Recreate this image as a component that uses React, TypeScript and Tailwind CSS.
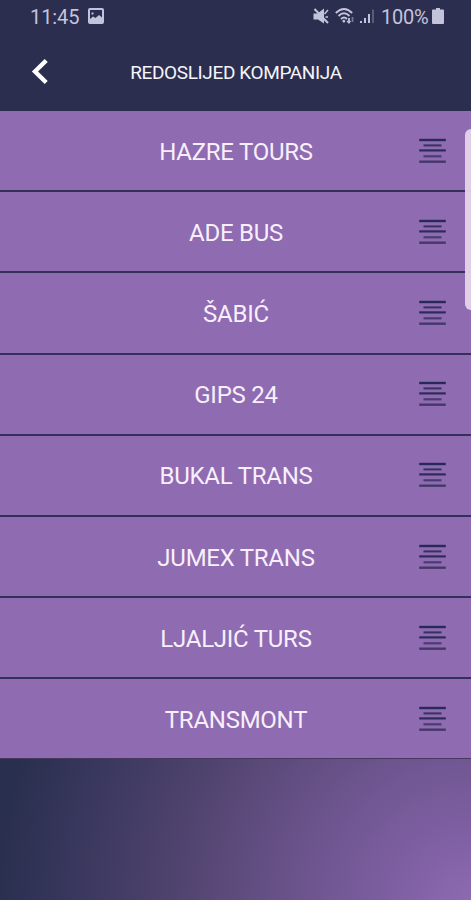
const companies = [
  "HAZRE TOURS",
  "ADE BUS",
  "ŠABIĆ",
  "GIPS 24",
  "BUKAL TRANS",
  "JUMEX TRANS",
  "LJALJIĆ TURS",
  "TRANSMONT",
];

function StatusBar() {
  return (
    <div className="flex h-8 shrink-0 items-center justify-between pl-[30px] pr-[27px] text-[20px] leading-8 text-[#c3c3dc]">
      <div className="flex items-center">
        <span className="w-[49px] pt-px tracking-[-0.1px] whitespace-nowrap">11:45</span>
        <svg className="ml-[9px] h-4 w-4" viewBox="0 0 16 16" fill="none">
          <rect x="1" y="1" width="14" height="14" rx="1" stroke="currentColor" strokeWidth="2" />
          <path d="M2 11 5 8.500l2.500 1.500L11 7l3 2.500V14H2z" fill="currentColor" />
          <path d="M3.500 4.500h2v2h-2z" fill="currentColor" />
        </svg>
      </div>
      <div className="flex items-center">
        <svg className="h-4 w-4" viewBox="0 0 16 16" fill="none">
          <path d="M.5 5.500H4.500l6.500-5v15L5 11.500H.5z" fill="currentColor" />
          <path d="m11.500 6 3.500-4M12.500 9H15" stroke="currentColor" strokeWidth="1.5" />
          <path d="m1.500 1 13.500 14" stroke="currentColor" strokeWidth="2" />
        </svg>
        <svg className="ml-[6px] h-4 w-5" viewBox="0 0 20 16" fill="none" stroke="currentColor" strokeWidth="1.8">
          <path d="M.8 5Q9 -3 17.200 5M3.500 8Q9 2.500 14.500 8M6 11Q9 8 12 11" />
          <path d="m7 13 2-1.500 1.500 1.500L9 15z" fill="currentColor" stroke="none" />
          <path d="M14 10v5" strokeWidth="1.8" />
          <path d="M17.500 9v5" strokeWidth="1.800" opacity=".5" />
          <path d="m12 13 2 2 1.500-2" strokeWidth="1.200" />
        </svg>
        <svg className="ml-[5px] h-4 w-4" viewBox="0 0 16 16" fill="currentColor">
          <path d="M0 13h2v2H0zM4 10h2v5H4zM8 6h2v9H8z" />
          <path d="M12 1.500h2V15h-2z" opacity=".3" />
        </svg>
        <span className="ml-[5px] w-[48px] pt-px tracking-[-0.200px] whitespace-nowrap">100%</span>
        <svg className="ml-[3px] h-4 w-[12px]" viewBox="0 0 12 16" fill="currentColor">
          <path d="M4 0h4v1.500h3q1 0 1 1V15q0 1-1 1H1q-1 0-1-1V2.500q0-1 1-1h3z" />
        </svg>
      </div>
    </div>
  );
}

function DragHandle() {
  return (
    <svg className="h-[26px] w-[27px]" viewBox="0 0 27 26">
      <path d="M.2 .8h26.600v2.400H.2z" fill="#26295a" />
      <path d="M4.500 6.400h18v2h-18z" fill="#37315f" />
      <path d="M.2 11.300h26.600v2.200H.2z" fill="#2d2b5a" />
      <path d="M4.500 17.200h18v2.200h-18z" fill="#4a3c72" />
      <path d="M.2 22.500h26.600v2.400H.2z" fill="#433869" />
    </svg>
  );
}

export default function App() {
  return (
    <div className="relative flex h-[900px] w-[471px] flex-col overflow-hidden bg-[#2c2e4f] font-['Roboto','Liberation_Sans',sans-serif]">
      <StatusBar />
      <header className="grid h-[79px] shrink-0 grid-cols-[80px_1fr_80px] items-center">
        <svg className="ml-[31px] h-[28px] w-[18px]" viewBox="0 0 18 28" fill="none">
          <path d="M15.200 2.500 4 13.500l11.200 11" stroke="#fff" strokeWidth="4.400" />
        </svg>
        <h1 className="pt-[3px] pl-px text-center text-[19px] tracking-[-0.37px] whitespace-nowrap text-[#f5f5fa]">
          REDOSLIJED KOMPANIJA
        </h1>
      </header>
      <main className="flex shrink-0 flex-col">
        {companies.map((name) => (
          <div
            key={name}
            className="grid h-[81.2px] grid-cols-[60px_1fr_60px] items-center border-b-2 border-[#33315c] bg-[#8f6bb1] last:h-[79.600px] last:border-b last:border-[#46395f]"
          >
            <span className="col-start-2 pt-[2px] pl-px text-center text-[24px] tracking-[-0.25px] whitespace-nowrap text-[#f8effc]">
              {name}
            </span>
            <div className="pl-2">
              <DragHandle />
            </div>
          </div>
        ))}
      </main>
      <div className="flex-1 bg-[radial-gradient(circle_485px_at_100%_105%,#8e6bb1_0%,#7f60a3_15%,#715793_30%,#614d80_46%,#4b416a_65%,#35355a_86%,#292f4e_98%)]" />
      <div className="absolute top-[129px] right-0 h-[181px] w-[6px] rounded-l-[6px] bg-[#e5d5ea]/95" />
    </div>
  );
}
